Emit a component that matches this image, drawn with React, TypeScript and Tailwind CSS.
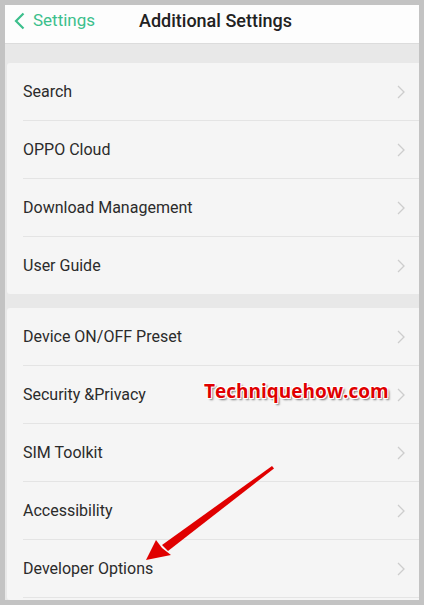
import React from 'react';

const groupOne = ['Search', 'OPPO Cloud', 'Download Management', 'User Guide'];
const groupTwo = ['Device ON/OFF Preset', 'Security &Privacy', 'SIM Toolkit', 'Accessibility', 'Developer Options'];

const Chevron = () => (
    <svg width="8" height="14" viewBox="0 0 8 14" className="shrink-0">
        <path d="M1 1 L7 7 L1 13" fill="none" stroke="#cdcdcd" strokeWidth="1.3" />
    </svg>
);

const Row = ({ label }: { label: string }) => (
    <div className="h-[57px] flex items-center justify-between pl-[16px] pr-[14px]">
        <span className="text-[16px] text-[#2b2b2b]">{label}</span>
        <Chevron />
    </div>
);

const Card = ({ items, className, trailingLine }: { items: string[]; className?: string; trailingLine?: boolean }) => (
    <div className={`ml-[2px] bg-[#f5f5f5] rounded-tl-[3px] rounded-bl-[3px] ${className ?? ''}`}>
        {items.map((label, i) => (
            <div key={label}>
                {i > 0 && <div className="ml-[16px] h-px bg-[#e4e4e4]" />}
                <Row label={label} />
            </div>
        ))}
        {trailingLine && <div className="ml-[16px] h-px bg-[#e4e4e4]" />}
    </div>
);

export default function App() {
    return (
        <div className="w-[424px] h-[605px] bg-[#c3c3c3] p-[5px] overflow-hidden" style={{ fontFamily: 'Roboto, "Noto Sans", sans-serif' }}>
            <div className="relative h-full bg-[#e8e8e8] flex flex-col overflow-hidden">
                {/* Header */}
                <div className="h-[39px] pb-[7px] bg-[#fdfdfd] border-b border-[#dcdcdc] flex items-center shrink-0">
                    <div className="flex items-center pl-[9px] w-[134px]">
                        <svg width="11" height="18" viewBox="0 0 11 18">
                            <path d="M9.5 1.5 L2 9 L9.5 16.5" fill="none" stroke="#3cbf8c" strokeWidth="2.2" />
                        </svg>
                        <span className="ml-[8px] text-[17px] text-[#3cbf8c]">Settings</span>
                    </div>
                    <span className="text-[18px] font-medium text-[#222]">Additional Settings</span>
                </div>

                <div className="h-[19px] shrink-0" />
                <Card items={groupOne} />
                <div className="h-[14px] shrink-0" />
                <Card items={groupTwo} className="flex-1" trailingLine />

                {/* Watermark */}
                <span
                    className="absolute left-[199px] top-[372px] text-[19px] font-bold text-[#e00000] [text-shadow:1px_1px_0_#fff,-1px_-1px_0_#fff,1px_-1px_0_#fff,-1px_1px_0_#fff,2px_2px_2px_#777]"
                    style={{ fontFamily: '"Open Sans", sans-serif' }}
                >
                    Techniquehow.com
                </span>

                {/* Arrow */}
                <svg className="absolute left-0 top-0" width="414" height="595" viewBox="5 5 414 595">
                    <polygon points="272,466 274,468.5 168,551 162,545" fill="#e00000" />
                    <polygon points="146,560 156,540 162,548 171,555" fill="#e00000" />
                </svg>
            </div>
        </div>
    );
}
